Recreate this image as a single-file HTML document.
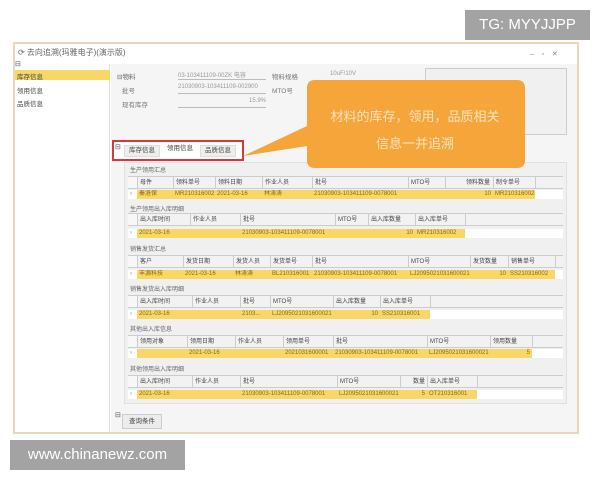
<!DOCTYPE html><html><head><meta charset="utf-8"><style>
*{margin:0;padding:0;box-sizing:border-box}
body{width:600px;height:480px;background:#fff;position:relative;overflow:hidden;font-family:"Liberation Sans","Noto Sans CJK SC",sans-serif;font-size:6px;color:#555}
.a{position:absolute;white-space:nowrap}
.g{position:absolute;left:128px;width:435px;border-top:1px solid #ccc}
.h,.d{position:absolute;left:0;height:12px}
.h span,.d span{position:absolute;top:0;height:100%;line-height:12px;padding-left:2px;overflow:hidden}
.h span{border-left:1px solid #ccc;background:#f2f2f2;color:#444}
.h{background:#f7f7f7;width:435px;border-bottom:1px solid #ccc}
.d{background:#fff;width:435px;height:9px}
.d span{line-height:9px;background:#f8d766;color:#8a6a10}
.lb{position:absolute;left:130px;color:#666;font-size:6px}
.sec{position:absolute;left:124px;width:443px;background:#f0f0f0;border:1px solid #e0e0e0}
</style></head><body>
<div class="a" style="left:13px;top:42px;width:566px;height:392px;border:2px solid #e6d8b8;background:#fff"></div>
<div class="a" style="left:15px;top:44px;width:562px;height:20px;background:#fff"></div>
<div class="a" style="left:18px;top:47px;font-size:8px;color:#666">⟳ 去向追溯(玛雅电子)(演示版)</div>
<div class="a" style="left:530px;top:50px;font-size:7px;color:#888">–&nbsp;&nbsp;&nbsp;&nbsp;▫&nbsp;&nbsp;&nbsp;&nbsp;✕</div>
<div class="a" style="left:15px;top:64px;width:95px;height:368px;background:#fff;border-right:1px solid #ddd"></div>
<div class="a" style="left:15px;top:60px;font-size:7px">⊟</div>
<div class="a" style="left:15px;top:70px;width:95px;height:10px;background:#f8d766"></div>
<div class="a" style="left:17px;top:71px;font-size:6.5px;color:#444">库存信息</div>
<div class="a" style="left:17px;top:85px;font-size:6.5px;color:#444">领用信息</div>
<div class="a" style="left:17px;top:98px;font-size:6.5px;color:#444">品质信息</div>
<div class="a" style="left:111px;top:64px;width:466px;height:368px;background:#f5f5f5"></div>
<div class="a" style="left:117px;top:71px;font-size:6.5px;color:#666">⊟物料</div>
<div class="a" style="left:122px;top:85px;font-size:6.5px;color:#777">批号</div>
<div class="a" style="left:122px;top:99px;font-size:6.5px;color:#777">现有库存</div>
<div class="a" style="left:178px;top:70px;width:88px;border-bottom:1px solid #bbb;color:#999;height:10px">03-103411109-00ZK 电容</div>
<div class="a" style="left:178px;top:84px;width:88px;border-bottom:1px solid #bbb;color:#999;height:10px">21030903-103411109-002900</div>
<div class="a" style="left:178px;top:98px;width:88px;border-bottom:1px solid #bbb;color:#999;height:10px;text-align:right">15.9%</div>
<div class="a" style="left:272px;top:71px;font-size:6.5px;color:#777">物料规格</div>
<div class="a" style="left:272px;top:85px;font-size:6.5px;color:#777">MTO号</div>
<div class="a" style="left:330px;top:71px;color:#999">10uF/10V</div>
<div class="a" style="left:425px;top:68px;width:142px;height:67px;border:1px solid #ccc;background:#f0f0f0"></div>
<div class="a" style="left:112px;top:140px;width:132px;height:21px;border:2px solid #d9363e;background:#fff"></div>
<div class="a" style="left:115px;top:143px;font-size:7px">⊟</div>
<div class="a" style="left:124px;top:145px;width:36px;height:12px;background:#eee;border:1px solid #ddd;font-size:6.5px;line-height:10px;text-align:center;color:#444">库存信息</div>
<div class="a" style="left:162px;top:144px;width:36px;height:13px;background:#fff;font-size:6.5px;line-height:10px;text-align:center;color:#444">领用信息</div>
<div class="a" style="left:200px;top:145px;width:36px;height:12px;background:#eee;border:1px solid #ddd;font-size:6.5px;line-height:10px;text-align:center;color:#444">品质信息</div>
<div class="sec" style="top:162px;height:242px"></div>

<div class="lb" style="top:165px">生产领用汇总</div>
<div class="g" style="top:176px"><div class="h"><span style="left:0;width:9px;background:#f7f7f7;border:0"></span><span style="left:9px;width:36px">母件</span><span style="left:45px;width:42px">领料单号</span><span style="left:87px;width:47px">领料日期</span><span style="left:134px;width:50px">作业人员</span><span style="left:184px;width:96px">批号</span><span style="left:280px;width:37px">MTO号</span><span style="left:317px;width:48px;text-align:right;padding-right:3px">领料数量</span><span style="left:365px;width:42px">制令单号</span><span style="left:407px;width:28px"></span></div>
<div class="d" style="top:13px"><span style="left:0;width:9px;background:#fff;color:#888">›</span><span style="left:9px;width:36px">秦洛保</span><span style="left:45px;width:42px">MR210316002</span><span style="left:87px;width:47px">2021-03-16</span><span style="left:134px;width:50px">林涛涛</span><span style="left:184px;width:96px">21030903-103411109-0078001</span><span style="left:280px;width:37px"></span><span style="left:317px;width:48px;text-align:right;padding-right:2px">10</span><span style="left:365px;width:42px">MR210316002</span></div></div>

<div class="lb" style="top:204px">生产领用出入库明细</div>
<div class="g" style="top:213px"><div class="h"><span style="left:0;width:9px;background:#f7f7f7;border:0"></span><span style="left:9px;width:53px">出入库时间</span><span style="left:62px;width:50px">作业人员</span><span style="left:112px;width:95px">批号</span><span style="left:207px;width:33px">MTO号</span><span style="left:240px;width:47px">出入库数量</span><span style="left:287px;width:50px">出入库单号</span><span style="left:337px;width:98px"></span></div>
<div class="d" style="top:15px"><span style="left:0;width:9px;background:#fff;color:#888">›</span><span style="left:9px;width:103px">2021-03-16</span><span style="left:112px;width:128px">21030903-103411109-0078001</span><span style="left:240px;width:47px;text-align:right;padding-right:2px">10</span><span style="left:287px;width:50px">MR210316002</span></div></div>

<div class="lb" style="top:244px">销售发货汇总</div>
<div class="g" style="top:255px"><div class="h"><span style="left:0;width:9px;background:#f7f7f7;border:0"></span><span style="left:9px;width:46px">客户</span><span style="left:55px;width:50px">发货日期</span><span style="left:105px;width:37px">发货人员</span><span style="left:142px;width:42px">发货单号</span><span style="left:184px;width:96px">批号</span><span style="left:280px;width:62px">MTO号</span><span style="left:342px;width:38px">发货数量</span><span style="left:380px;width:47px">销售单号</span><span style="left:427px;width:8px"></span></div>
<div class="d" style="top:14px"><span style="left:0;width:9px;background:#fff;color:#888">›</span><span style="left:9px;width:46px">丰源科技</span><span style="left:55px;width:50px">2021-03-16</span><span style="left:105px;width:37px">林涛涛</span><span style="left:142px;width:42px">BL210316001</span><span style="left:184px;width:96px">21030903-103411109-0078001</span><span style="left:280px;width:62px">LJ2095021031600021</span><span style="left:342px;width:38px;text-align:right;padding-right:2px">10</span><span style="left:380px;width:47px">SS210316002</span></div></div>

<div class="lb" style="top:284px">销售发货出入库明细</div>
<div class="g" style="top:295px"><div class="h"><span style="left:0;width:9px;background:#f7f7f7;border:0"></span><span style="left:9px;width:55px">出入库时间</span><span style="left:64px;width:48px">作业人员</span><span style="left:112px;width:30px">批号</span><span style="left:142px;width:63px">MTO号</span><span style="left:205px;width:47px">出入库数量</span><span style="left:252px;width:50px">出入库单号</span><span style="left:302px;width:133px"></span></div>
<div class="d" style="top:14px"><span style="left:0;width:9px;background:#fff;color:#888">›</span><span style="left:9px;width:103px">2021-03-16</span><span style="left:112px;width:30px">2103...</span><span style="left:142px;width:63px">LJ2095021031600021</span><span style="left:205px;width:47px;text-align:right;padding-right:2px">10</span><span style="left:252px;width:50px">SS210316001</span></div></div>

<div class="lb" style="top:324px">其他出入库信息</div>
<div class="g" style="top:335px"><div class="h"><span style="left:0;width:9px;background:#f7f7f7;border:0"></span><span style="left:9px;width:50px">领用对象</span><span style="left:59px;width:48px">领用日期</span><span style="left:107px;width:48px">作业人员</span><span style="left:155px;width:50px">领用单号</span><span style="left:205px;width:94px">批号</span><span style="left:299px;width:63px">MTO号</span><span style="left:362px;width:42px">领用数量</span><span style="left:404px;width:31px"></span></div>
<div class="d" style="top:13px"><span style="left:0;width:9px;background:#fff;color:#888">›</span><span style="left:9px;width:50px"></span><span style="left:59px;width:96px">2021-03-16</span><span style="left:155px;width:50px">2021031600001</span><span style="left:205px;width:94px">21030903-103411109-0078001</span><span style="left:299px;width:63px">LJ2095021031600021</span><span style="left:362px;width:42px;text-align:right;padding-right:2px">5</span></div></div>

<div class="lb" style="top:364px">其他领用出入库明细</div>
<div class="g" style="top:375px"><div class="h"><span style="left:0;width:9px;background:#f7f7f7;border:0"></span><span style="left:9px;width:55px">出入库时间</span><span style="left:64px;width:48px">作业人员</span><span style="left:112px;width:97px">批号</span><span style="left:209px;width:63px">MTO号</span><span style="left:272px;width:27px;text-align:right;padding-right:2px">数量</span><span style="left:299px;width:50px">出入库单号</span><span style="left:349px;width:86px"></span></div>
<div class="d" style="top:14px"><span style="left:0;width:9px;background:#fff;color:#888">›</span><span style="left:9px;width:103px">2021-03-16</span><span style="left:112px;width:97px">21030903-103411109-0078001</span><span style="left:209px;width:63px">LJ2095021031600021</span><span style="left:272px;width:27px;text-align:right;padding-right:2px">5</span><span style="left:299px;width:50px">OT210316001</span></div></div>

<div class="a" style="left:115px;top:411px;font-size:7px">⊟</div>
<div class="a" style="left:122px;top:414px;width:40px;height:15px;background:#ececec;border:1px solid #ccc;font-size:6.5px;line-height:13px;text-align:center;color:#444">查询条件</div>

<svg class="a" style="left:235px;top:78px" width="295" height="94"><path d="M72 10 Q72 2 80 2 L282 2 Q290 2 290 10 L290 82 Q290 90 282 90 L80 90 Q72 90 72 82 L72 68 L8 78 L72 48 Z" fill="#f5a53a"/></svg>
<div class="a" style="left:305px;top:103px;width:220px;text-align:center;font-size:13px;color:#fde3bd;line-height:27px;white-space:normal">材料的库存，领用，品质相关<br>信息一并追溯</div>

<div class="a" style="left:465px;top:10px;width:125px;height:30px;background:#a3a3a3;color:#fff;font-size:15px;line-height:30px;text-align:center">TG: MYYJJPP</div>
<div class="a" style="left:10px;top:440px;width:175px;height:30px;background:#a3a3a3;color:#fff;font-size:15px;line-height:30px;text-align:center">www.chinanewz.com</div>
</body></html>
